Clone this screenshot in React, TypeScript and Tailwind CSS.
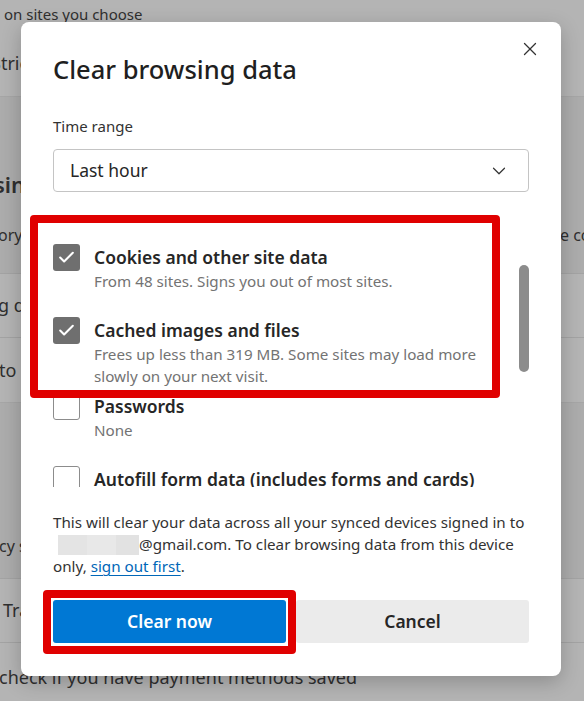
import { X, ChevronDown, Check } from "lucide-react";

const font = { fontFamily: '"Noto Sans", "Open Sans", Arial, sans-serif' };

function Backdrop() {
  return (
    <div className="flex flex-col text-[#2f2f2f]">
      <div className="h-[97px] bg-[#b4b4b4] border-b border-[#a6a6a6] flex flex-col">
        <div className="pl-[4px] leading-[20px] text-[15px] mt-[4px] whitespace-nowrap">on sites you choose</div>
        <div className="-ml-[9px] leading-[24px] text-[18px] mt-[27px] whitespace-nowrap">Strict</div>
      </div>
      <div className="h-[176px] bg-[#acacac] flex flex-col">
        <div className="-ml-[6px] mt-[73px] text-[22px] font-semibold leading-[28px] whitespace-nowrap">sing data</div>
        <div className="flex mt-[27px] text-[16px] leading-[20px] whitespace-nowrap">
          <span className="w-[562px] shrink-0 -ml-[2px]">ory</span>
          <span>e cookies</span>
        </div>
      </div>
      <div className="h-[65px] bg-[#b4b4b4] border-t border-b border-[#a3a3a3] flex items-center text-[18px] whitespace-nowrap">
        <span className="-ml-[2px]">g data now</span>
      </div>
      <div className="h-[65px] bg-[#b4b4b4] border-b border-[#a6a6a6] flex items-center text-[18px] whitespace-nowrap">
        <span className="-ml-[1px]">to clear every time</span>
      </div>
      <div className="h-[175px] bg-[#acacac] flex flex-col justify-end pb-[22px]">
        <div className="-ml-[1px] text-[16px] leading-[20px] whitespace-nowrap">cy settings</div>
      </div>
      <div className="h-[65px] bg-[#b4b4b4] border-t border-b border-[#a3a3a3] flex items-center text-[18px] whitespace-nowrap">
        <span className="pl-[3px]">Track" requests</span>
      </div>
      <div className="h-[80px] bg-[#b4b4b4] pt-[22px] text-[18px] leading-[24px] whitespace-nowrap">
        <span className="-ml-[1px]">check if you have payment methods saved</span>
      </div>
    </div>
  );
}

type Item = { title: string; sub: string[]; checked: boolean; h: string };

const items: Item[] = [
  { title: "Cookies and other site data", sub: ["From 48 sites. Signs you out of most sites."], checked: true, h: "h-[73px]" },
  {
    title: "Cached images and files",
    sub: ["Frees up less than 319 MB. Some sites may load more", "slowly on your next visit."],
    checked: true,
    h: "h-[76px]",
  },
  { title: "Passwords", sub: ["None"], checked: false, h: "h-[73px]" },
  { title: "Autofill form data (includes forms and cards)", sub: ["None"], checked: false, h: "h-[73px]" },
];

function CheckBox({ checked }: { checked: boolean }) {
  if (checked) {
    return (
      <div className="w-[27px] h-[27px] shrink-0 rounded-[3px] bg-[#6f6f6f] flex items-center justify-center">
        <Check size={19} strokeWidth={2.6} className="text-white" />
      </div>
    );
  }
  return <div className="w-[27px] h-[27px] shrink-0 rounded-[3px] border border-[#8c8c8c] bg-white" />;
}

export default function App() {
  return (
    <div className="relative w-[584px] h-[701px] overflow-hidden bg-[#acacac]" style={font}>
      <Backdrop />

      <div className="absolute left-[21px] top-[22px] w-[540px] h-[654px] rounded-[8px] bg-white shadow-[0_6px_20px_rgba(0,0,0,0.22)] px-[32px] pt-[31px] pb-[33px] flex flex-col text-[#262626]">
        <button className="absolute right-[19px] top-[15px] w-[24px] h-[24px] flex items-center justify-center text-[#333]">
          <X size={22} strokeWidth={1.4} />
        </button>

        <h1 className="text-[25.5px] leading-[32px] font-medium text-[#1f1f1f] whitespace-nowrap">Clear browsing data</h1>

        <div className="mt-[31px] text-[15px] leading-[20px] text-[#333]">Time range</div>
        <div className="mt-[13px] h-[43px] w-[476px] rounded-[4px] border border-[#c4c4c4] flex items-center justify-between pl-[16px] pr-[18px]">
          <span className="text-[17.5px] text-[#262626]">Last hour</span>
          <ChevronDown size={22} strokeWidth={1.3} className="text-[#333]" />
        </div>

        <div className="mt-[12px] h-[283px] flex overflow-hidden">
          <div className="flex-1 pt-[40px] flex flex-col">
            {items.map((it) => (
              <div key={it.title} className={`${it.h} shrink-0 flex gap-[14px]`}>
                <CheckBox checked={it.checked} />
                <div className="flex flex-col">
                  <div className="text-[17.5px] leading-[26px] font-semibold text-[#262626] whitespace-nowrap">{it.title}</div>
                  {it.sub.map((s) => (
                    <div key={s} className="text-[15.2px] leading-[22px] text-[#737373] whitespace-nowrap">{s}</div>
                  ))}
                </div>
              </div>
            ))}
          </div>
          <div className="w-[10px] shrink-0">
            <div className="mt-[61px] h-[107px] rounded-full bg-[#8c8c8c]" />
          </div>
        </div>

        <p className="mt-[24px] text-[15.2px] leading-[22px] text-[#333] whitespace-nowrap">
          This will clear your data across all your synced devices signed in to
          <br />
          <span className="inline-flex align-middle ml-[5px] h-[20px] -mt-[2px]">
            <span className="w-[29px] bg-[#e4e4e4]" />
            <span className="w-[29px] bg-[#e8e8e8]" />
            <span className="w-[23px] bg-[#e2e2e2]" />
          </span>
          @gmail.com. To clear browsing data from this device
          <br />
          only, <span className="text-[#0067b8] underline underline-offset-[3px]">sign out first</span>.
        </p>

        <div className="mt-[23px] flex gap-[10px]">
          <button className="h-[43px] w-[233px] rounded-[3px] bg-[#0078d4] text-white text-[17.5px] font-semibold">Clear now</button>
          <button className="h-[43px] flex-1 rounded-[3px] bg-[#ebebeb] text-[#262626] text-[17.5px] font-semibold">Cancel</button>
        </div>

        {/* annotation boxes */}
        <div className="absolute left-[9px] top-[193px] w-[470px] h-[183px] rounded-[4px] border-[8px] border-[#e00000]" />
        <div className="absolute left-[22px] top-[568px] w-[253px] h-[64px] rounded-[4px] border-[8px] border-[#e00000]" />
      </div>
    </div>
  );
}
